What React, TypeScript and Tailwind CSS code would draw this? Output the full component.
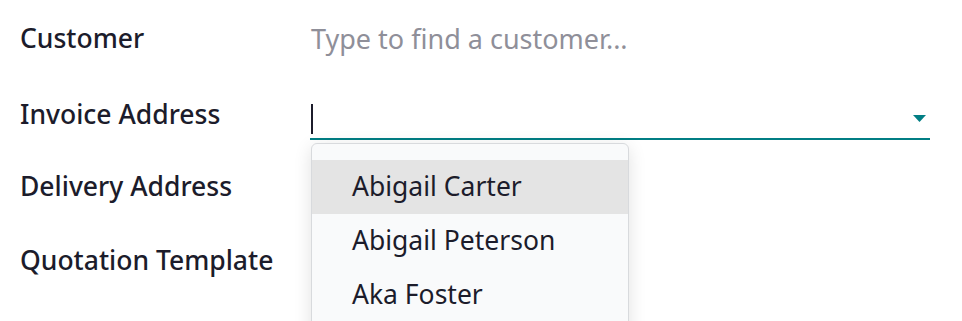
const labels = ["Customer", "Invoice Address", "Delivery Address", "Quotation Template"];
const options = ["Abigail Carter", "Abigail Peterson", "Aka Foster"];

export default function App() {
  return (
    <div className="h-[321px] w-[962px] overflow-hidden bg-white font-['Noto_Sans',sans-serif] text-[#1c1c2b]">
      <div className="grid grid-cols-[290px_620px] pl-5 pt-[2px]">
        {/* Customer */}
        <div className="flex h-[74px] items-center text-[26.5px] font-medium">{labels[0]}</div>
        <div className="flex h-[74px] items-center">
          <span className="pl-[1px] text-[27px] text-[#8f8f99]">Type to find a customer...</span>
        </div>

        {/* Invoice address with open dropdown */}
        <div className="flex h-[74px] items-center pt-[3px] text-[26.5px] font-medium">{labels[1]}</div>
        <div className="relative h-[74px]">
          <div className="mt-[23px] flex h-[41px] items-center border-b-2 border-[#017e84] pr-1">
            <span className="ml-[1px] h-[30px] w-[2px] bg-[#1c1c2b]" />
            <svg className="ml-auto" width="13" height="7" viewBox="0 0 13 7">
              <path d="M0 0h13L6.5 7z" fill="#017e84" />
            </svg>
          </div>
          <ul className="absolute left-[1px] top-[67px] z-10 h-[200px] w-[318px] rounded-md border border-[#d8dadd] bg-[#f9fafb] pt-4 text-[26.5px] shadow-[0_4px_18px_rgba(0,0,0,0.12)]">
            {options.map((o, i) => (
              <li
                key={o}
                className={`flex h-[54px] items-center pl-10 ${i === 0 ? "bg-[#e4e4e4]" : ""}`}
              >
                {o}
              </li>
            ))}
          </ul>
        </div>

        <div className="flex h-[74px] items-center text-[26.5px] font-medium">{labels[2]}</div>
        <div className="h-[74px]" />

        <div className="flex h-[74px] items-center text-[26.5px] font-medium">{labels[3]}</div>
        <div className="h-[74px]" />
      </div>
    </div>
  );
}
